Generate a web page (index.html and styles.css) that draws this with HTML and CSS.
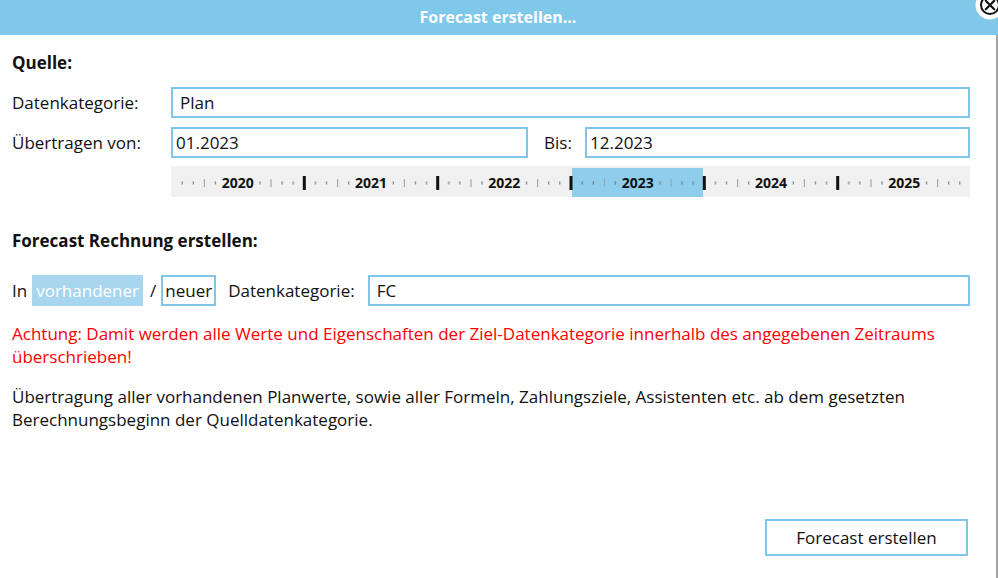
FILE: index.html
```html
<!DOCTYPE html>
<html lang="de">
<head>
  <meta charset="UTF-8">
  <meta name="viewport" content="width=device-width, initial-scale=1.0">
  <title>Forecast erstellen...</title>
  <link rel="stylesheet" href="styles.css">
</head>
<body>
  <div class="dialog">
    <div class="titlebar">Forecast erstellen...</div>

    <!-- Close button sits over the corner of the title bar -->
    <button class="close-btn" title="Schließen">
      <svg width="30" height="30" viewBox="0 0 30 30">
        <circle cx="15" cy="15" r="14.5" fill="#fff"/>
        <circle cx="15" cy="15" r="9" fill="none" stroke="#111" stroke-width="2"/>
        <path d="M10.8 10.8 L19.2 19.2 M19.2 10.8 L10.8 19.2" stroke="#111" stroke-width="2.2" stroke-linecap="round"/>
      </svg>
    </button>

    <div class="content">
      <!-- Source -->
      <h2 class="section-title">Quelle:</h2>
      <div class="row">
        <label class="row-label">Datenkategorie:</label>
        <div class="field">Plan</div>
      </div>
      <div class="row">
        <label class="row-label">Übertragen von:</label>
        <div class="field field-date field-from">01.2023</div>
        <label class="bis-label">Bis:</label>
        <div class="field field-date">12.2023</div>
      </div>

      <!-- Year / month ruler -->
      <div class="timeline">
        <svg width="799" height="31" viewBox="0 0 799 31">
          <defs>
            <pattern id="months" width="133.333" height="31" patternUnits="userSpaceOnUse">
              <rect class="tick-dot" x="10.6" y="15.5" width="1" height="3"/>
              <rect class="tick-dot" x="21.7" y="15.5" width="1" height="3"/>
              <rect class="tick-mid" x="32.8" y="13" width="1" height="8"/>
              <rect class="tick-dot" x="43.9" y="15.5" width="1" height="3"/>
              <rect class="tick-dot" x="88.4" y="15.5" width="1" height="3"/>
              <rect class="tick-mid" x="99.5" y="13" width="1" height="8"/>
              <rect class="tick-dot" x="110.6" y="15.5" width="1" height="3"/>
              <rect class="tick-dot" x="121.7" y="15.5" width="1" height="3"/>
            </pattern>
          </defs>
          <rect class="tl-selected" x="401" y="2" width="131" height="29"/>
          <rect x="0" y="0" width="799" height="31" fill="url(#months)"/>
          <rect class="tick-year" x="131.8" y="10" width="3" height="14"/>
          <rect class="tick-year" x="265.2" y="10" width="3" height="14"/>
          <rect class="tick-year" x="398.5" y="10" width="3" height="14"/>
          <rect class="tick-year" x="531.8" y="10" width="3" height="14"/>
          <rect class="tick-year" x="665.2" y="10" width="3" height="14"/>
          <text class="tl-year" x="66.7" y="22">2020</text>
          <text class="tl-year" x="200" y="22">2021</text>
          <text class="tl-year" x="333.3" y="22">2022</text>
          <text class="tl-year" x="466.7" y="22">2023</text>
          <text class="tl-year" x="600" y="22">2024</text>
          <text class="tl-year" x="733.3" y="22">2025</text>
        </svg>
      </div>

      <!-- Target -->
      <h2 class="section-title section-target">Forecast Rechnung erstellen:</h2>
      <div class="row target-row">
        <span>In</span>
        <span class="toggle toggle-on">vorhandener</span>
        <span class="slash">/</span>
        <span class="toggle">neuer</span>
        <label class="target-label">Datenkategorie:</label>
        <div class="field">FC</div>
      </div>

      <p class="warn">Achtung: Damit werden alle Werte und Eigenschaften der Ziel-Datenkategorie innerhalb des angegebenen Zeitraums überschrieben!</p>
      <p class="info">Übertragung aller vorhandenen Planwerte, sowie aller Formeln, Zahlungsziele, Assistenten etc. ab dem gesetzten Berechnungsbeginn der Quelldatenkategorie.</p>

      <div class="actions">
        <button class="create-btn">Forecast erstellen</button>
      </div>
    </div>
  </div>
</body>
</html>
```

FILE: styles.css
```css
* { margin: 0; padding: 0; box-sizing: border-box; }
body { font-family: 'Open Sans', 'Noto Sans', sans-serif; font-size: 17px; color: #111; background: #a4a4a4; overflow: hidden; }

.dialog { position: relative; width: 998px; height: 578px; }
.titlebar { height: 35px; background: #80c8ea; color: #fff; font-size: 16px; font-weight: bold; line-height: 35px; text-align: center; padding-right: 2px; }
.close-btn { position: absolute; top: -10px; left: 975px; width: 30px; height: 30px; border: none; background: none; cursor: pointer; }
.close-btn svg { display: block; }

.content { width: 996px; height: 543px; background: #fff; padding: 17px 26px 0 12px; }
.section-title { font-size: 17px; font-weight: bold; line-height: 22px; margin-bottom: 13px; }
.section-target { margin-top: 33px; margin-bottom: 23px; }

.row { display: flex; align-items: center; height: 31px; margin-bottom: 9px; }
.row-label { width: 159px; flex-shrink: 0; }
.field { flex: 1; height: 31px; border: 2px solid #80c6e8; padding: 0 7px; line-height: 27px; background: #fff; }
.field-date { padding-left: 3px; }
.field-from { flex: none; width: 357px; }
.bis-label { width: 57px; padding-left: 16px; flex-shrink: 0; }

.timeline { margin-left: 159px; width: 799px; height: 31px; background: #f0f0f0; margin-top: -1px; }
.timeline svg { display: block; }
.tl-selected { fill: #8ecdec; }
.tick-dot { fill: #666; }
.tick-mid { fill: #999; }
.tick-year { fill: #111; }
.tl-year { font-family: 'Open Sans', sans-serif; font-size: 14px; font-weight: bold; fill: #111; text-anchor: middle; }

.target-row { margin-bottom: 0; }
.toggle { height: 31px; border: 2px solid #80c6e8; padding: 0 2px; line-height: 27px; }
.toggle-on { margin-left: 5px; background: #a8d6ee; border-color: #a8d6ee; color: #fff; }
.slash { margin: 0 5px 0 7px; }
.target-label { margin: 0 13px 0 12px; }

.warn { margin-top: 16px; line-height: 23px; color: #f00; }
.info { margin-top: 17px; line-height: 23px; }

.actions { display: flex; justify-content: flex-end; margin-top: 88px; padding-right: 2px; }
.create-btn { width: 203px; height: 37px; border: 2px solid #80c6e8; background: #fff; font: inherit; color: #111; cursor: pointer; }
.create-btn:hover { background: #eef7fc; }
```
